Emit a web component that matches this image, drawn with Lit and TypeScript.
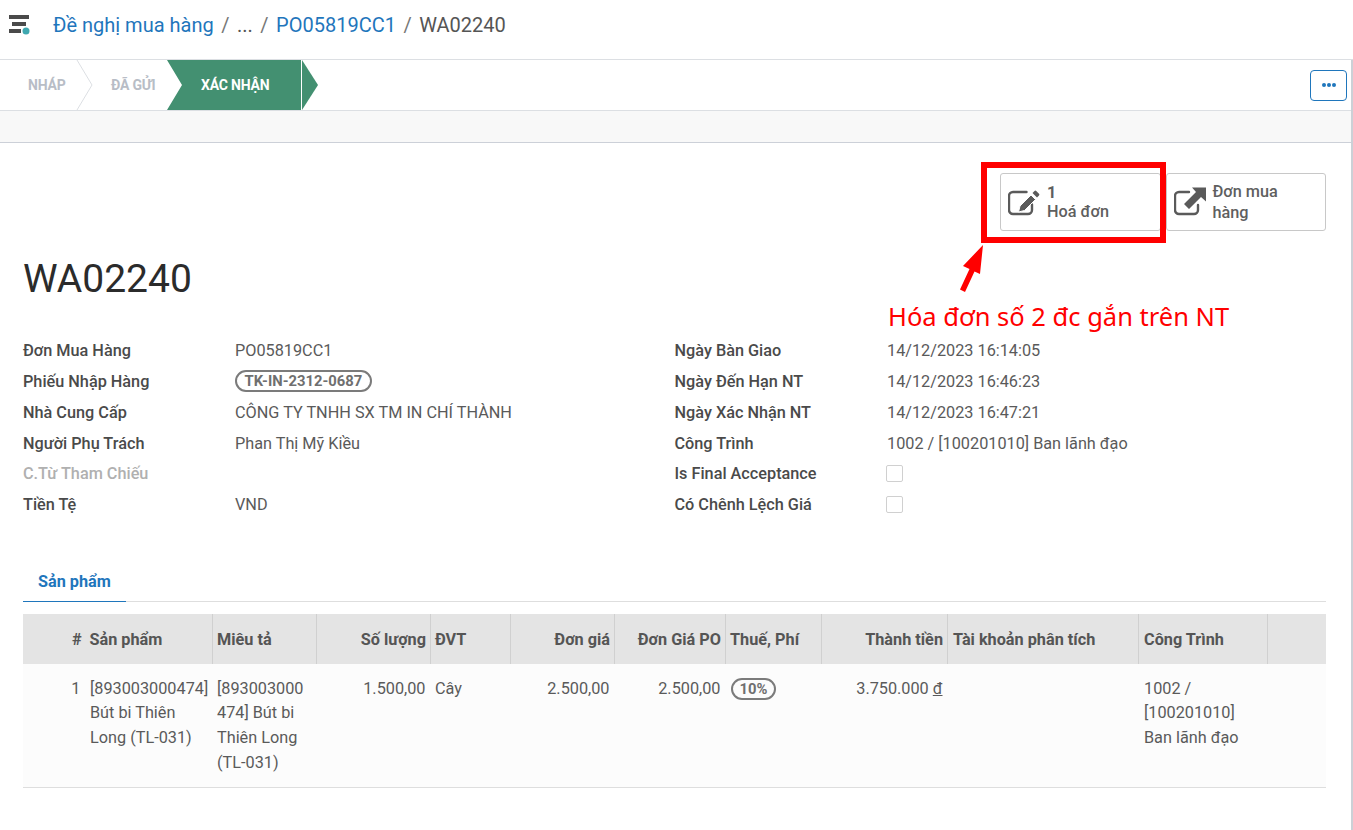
import { LitElement, css, html, svg } from "lit";
import { customElement } from "lit/decorators.js";

const leftFields = [
  { label: "Đơn Mua Hàng", value: "PO05819CC1" },
  { label: "Phiếu Nhập Hàng", tag: "TK-IN-2312-0687" },
  { label: "Nhà Cung Cấp", value: "CÔNG TY TNHH SX TM IN CHÍ THÀNH" },
  { label: "Người Phụ Trách", value: "Phan Thị Mỹ Kiều" },
  { label: "C.Từ Tham Chiếu", value: "", muted: true },
  { label: "Tiền Tệ", value: "VND" },
];

const rightFields = [
  { label: "Ngày Bàn Giao", value: "14/12/2023 16:14:05" },
  { label: "Ngày Đến Hạn NT", value: "14/12/2023 16:46:23" },
  { label: "Ngày Xác Nhận NT", value: "14/12/2023 16:47:21" },
  { label: "Công Trình", value: "1002 / [100201010] Ban lãnh đạo" },
  { label: "Is Final Acceptance", check: true },
  { label: "Có Chênh Lệch Giá", check: true },
];

const columns = [
  { label: "#", width: 62, cls: "num" },
  { label: "Sản phẩm", width: 127, cls: "" },
  { label: "Miêu tả", width: 104, cls: "" },
  { label: "Số lượng", width: 114, cls: "num" },
  { label: "ĐVT", width: 80, cls: "" },
  { label: "Đơn giá", width: 104, cls: "num" },
  { label: "Đơn Giá PO", width: 111, cls: "num" },
  { label: "Thuế, Phí", width: 96, cls: "" },
  { label: "Thành tiền", width: 126, cls: "num" },
  { label: "Tài khoản phân tích", width: 191, cls: "pad" },
  { label: "Công Trình", width: 129, cls: "pad" },
  { label: "", width: 59, cls: "" },
];

const editIcon = svg`<path d="M24 18.500V24a4 4 0 0 1-4 4H5a4 4 0 0 1-4-4V10a4 4 0 0 1 4-4H18.500" fill="none" stroke="#5a5a5a" stroke-width="2.400" stroke-linecap="round"/>
  <path d="M12 20 23 9 27.500 13.500 16.500 24.500 10.500 26Z" fill="#5a5a5a" stroke="#fff" stroke-width="1"/>
  <path d="M24.500 7 26.500 5a1.200 1.200 0 0 1 1.700 0L31 7.800a1.200 1.200 0 0 1 0 1.700L29 11.500Z" fill="#5a5a5a"/>`;

const linkIcon = svg`<path d="M24 19V24a4 4 0 0 1-4 4H5a4 4 0 0 1-4-4V10a4 4 0 0 1 4-4H15" fill="none" stroke="#5a5a5a" stroke-width="2.400" stroke-linecap="round"/>
  <path d="M18 1.500H32V15.500L27 11 15 23 10 18 22 6Z" fill="#5a5a5a"/>`;

@customElement("app-root")
export class AppRoot extends LitElement {
  static styles = css`
    :host {
      display: block;
      position: relative;
      width: 1353px;
      height: 830px;
      overflow: hidden;
      background: #fff;
      color: #555;
      font-family: Roboto, sans-serif;
      font-size: 16.250px;
    }

    .topbar {
      display: flex;
      align-items: center;
      height: 59px;
      border-bottom: 1px solid #dcdfe3;
      padding-left: 9px;
    }

    .apps {
      width: 21px;
      height: 20px;
      margin-right: 23px;
      margin-top: -10px;
    }

    .crumbs {
      display: flex;
      gap: 7.500px;
      font-size: 20px;
      margin-top: -10px;
      color: #555;
    }

    .crumbs .link {
      color: #1f76bc;
    }

    .crumbs .sep {
      color: #777;
    }

    .page {
      width: 1351px;
      height: 770px;
      border-right: 2px solid #ccd0d6;
    }

    .statusbar {
      display: flex;
      align-items: center;
      justify-content: space-between;
      height: 50px;
      border-bottom: 1px solid #dcdfe3;
      padding-right: 4px;
    }

    .steps {
      display: flex;
      height: 50px;
      font-size: 14px;
      font-weight: 700;
      line-height: 51px;
      letter-spacing: -0.200px;
      color: #b8bdc6;
    }

    .step {
      position: relative;
      text-align: left;
    }

    .step svg {
      position: absolute;
      left: 0;
      top: 0;
    }

    .step span {
      position: relative;
    }

    .step.draft {
      width: 93px;
      text-indent: 28px;
    }

    .step.sent {
      width: 74px;
      text-indent: 18px;
    }

    .step.active {
      width: 151px;
      text-indent: 34px;
      color: #fff;
    }

    .more {
      display: flex;
      align-items: center;
      justify-content: center;
      width: 37px;
      height: 31px;
      box-sizing: border-box;
      border: 1px solid #1f76bc;
      border-radius: 4px;
      background: #fff;
      padding: 0;
    }

    .strip {
      height: 31px;
      background: #f8f8f8;
      border-bottom: 1px solid #ccd0d8;
    }

    .sheet {
      padding: 30px 25px 0 23px;
    }

    .buttons {
      display: flex;
      justify-content: flex-end;
      gap: 5px;
    }

    .stat {
      display: flex;
      align-items: center;
      gap: 7px;
      width: 160.500px;
      height: 58px;
      box-sizing: border-box;
      border: 1px solid #c8c8c8;
      border-radius: 3px;
      padding-left: 7px;
      font-weight: 500;
      line-height: 21px;
      color: #5f5f5f;
    }

    .stat svg {
      flex: none;
    }

    .stat .text.count {
      line-height: 19px;
    }

    .stat strong {
      font-weight: 700;
    }

    h1 {
      margin: 26px 0 0;
      font-size: 39px;
      font-weight: 400;
      line-height: 44px;
      color: #2b2b2b;
    }

    .form {
      display: grid;
      grid-template-columns: 651.500px 1fr;
      margin-top: 34.300px;
    }

    .group {
      display: grid;
      grid-auto-rows: 30.800px;
      align-items: center;
    }

    .group.left {
      grid-template-columns: 212px 1fr;
    }

    .group.right {
      grid-template-columns: 212.500px 1fr;
    }

    .label {
      font-weight: 500;
      color: #4a4a4a;
    }

    .label.muted {
      color: #b0b0b0;
    }

    .value {
      color: #5a5a5a;
    }

    .pill {
      display: inline-block;
      box-sizing: border-box;
      height: 22px;
      line-height: 18px;
      border: 2px solid #7b7b7b;
      border-radius: 11px;
      padding: 0 7.500px;
      font-size: 14.800px;
      font-weight: 700;
      color: #6f6f6f;
      vertical-align: middle;
    }

    .check {
      display: block;
      width: 17px;
      height: 17px;
      margin-left: -1px;
      box-sizing: border-box;
      border: 1px solid #d0d0d0;
      border-radius: 2px;
    }

    .tabs {
      display: flex;
      margin-top: 38.700px;
      border-bottom: 1px solid #dedede;
    }

    .tab {
      width: 88px;
      padding-left: 15px;
      height: 42px;
      line-height: 45px;
      margin-bottom: -1px;
      border-bottom: 1px solid #1f76bc;
      font-weight: 700;
      color: #1f76bc;
    }

    table {
      width: 1303px;
      margin-top: 12px;
      border-collapse: collapse;
      table-layout: fixed;
    }

    th {
      height: 50px;
      padding: 2px 3.500px 0 4.500px;
      background: #e4e4e4;
      border-right: 1px solid #d0d0d0;
      font-weight: 700;
      text-align: left;
      color: #555;
      box-sizing: border-box;
    }

    th:first-child,
    th:last-child {
      border-right: none;
    }

    td {
      height: 124px;
      padding: 13px 5px 12px;
      background: #fcfcfc;
      border-bottom: 1px solid #dedede;
      line-height: 24.600px;
      vertical-align: top;
      box-sizing: border-box;
      overflow-wrap: anywhere;
      color: #5a5a5a;
    }

    td.code {
      padding-right: 2px;
    }

    th.pad {
      padding-left: 5.500px;
    }

    td.pad {
      padding-left: 6px;
    }

    th.num,
    td.num {
      text-align: right;
    }

    td.num {
      padding-right: 4.500px;
    }

    .tax {
      display: inline-block;
      box-sizing: border-box;
      height: 22px;
      line-height: 18px;
      margin-left: 0.500px;
      border: 2px solid #7b7b7b;
      border-radius: 11px;
      padding: 0 7px;
      font-size: 14.800px;
      font-weight: 700;
      color: #6f6f6f;
    }

    .currency {
      text-decoration: underline;
    }

    .callout {
      position: absolute;
      left: 981px;
      top: 162px;
      width: 185px;
      height: 81px;
      box-sizing: border-box;
      border: 6px solid #ff0000;
    }

    .arrow {
      position: absolute;
      left: 955px;
      top: 240px;
    }

    .note {
      position: absolute;
      left: 888px;
      top: 298px;
      font-family: "Noto Sans", sans-serif;
      font-size: 25.500px;
      line-height: 36px;
      color: #ff0000;
      white-space: nowrap;
    }
  `;

  private renderField(f: any) {
    return html`
      <div class="label ${f.muted ? "muted" : ""}">${f.label}</div>
      <div class="value">
        ${f.tag ? html`<span class="pill">${f.tag}</span>` : ""}
        ${f.check ? html`<span class="check"></span>` : ""}
        ${f.value ?? ""}
      </div>
    `;
  }

  render() {
    return html`
      <div class="topbar">
        <svg class="apps" viewBox="0 0 21 20">
          <rect x="0" y="0" width="20" height="4" fill="#4a4a4a"></rect>
          <rect x="3" y="7" width="14" height="4" fill="#4a4a4a"></rect>
          <rect x="0" y="14" width="12" height="4" fill="#4a4a4a"></rect>
          <circle cx="17" cy="16" r="3.500" fill="#3fa8b0"></circle>
        </svg>
        <div class="crumbs">
          <span class="link">Đề nghị mua hàng</span>
          <span class="sep">/</span>
          <span>...</span>
          <span class="sep">/</span>
          <span class="link">PO05819CC1</span>
          <span class="sep">/</span>
          <span>WA02240</span>
        </div>
      </div>

      <div class="page">
        <div class="statusbar">
          <div class="steps">
            <div class="step draft">
              <svg width="93" height="50"><path d="M77 0 92 25 77 50" fill="none" stroke="#dcdfe3"></path></svg>
              <span>NHÁP</span>
            </div>
            <div class="step sent"><span>ĐÃ GỬI</span></div>
            <div class="step active">
              <svg width="151" height="50"><path d="M0 0H134V50H0L15 25Z" fill="#439071"></path><path d="M135 0 151 25 135 50Z" fill="#439071"></path></svg>
              <span>XÁC NHẬN</span>
            </div>
          </div>
          <button class="more">
            <svg width="14" height="4"><circle cx="2" cy="2" r="2" fill="#1f76bc"></circle><circle cx="7" cy="2" r="2" fill="#1f76bc"></circle><circle cx="12" cy="2" r="2" fill="#1f76bc"></circle></svg>
          </button>
        </div>

        <div class="strip"></div>

        <div class="sheet">
          <div class="buttons">
            <div class="stat">
              <svg width="32" height="32" viewBox="0 0 32 32">${editIcon}</svg>
              <div class="text count"><strong>1</strong><br />Hoá đơn</div>
            </div>
            <div class="stat">
              <svg width="32" height="32" viewBox="0 0 32 32">${linkIcon}</svg>
              <div class="text">Đơn mua<br />hàng</div>
            </div>
          </div>

          <h1>WA02240</h1>

          <div class="form">
            <div class="group left">${leftFields.map((f) => this.renderField(f))}</div>
            <div class="group right">${rightFields.map((f) => this.renderField(f))}</div>
          </div>

          <div class="tabs"><div class="tab">Sản phẩm</div></div>

          <table>
            <colgroup>${columns.map((c) => html`<col style="width:${c.width}px" />`)}</colgroup>
            <thead>
              <tr>${columns.map((c) => html`<th class=${c.cls}>${c.label}</th>`)}</tr>
            </thead>
            <tbody>
              <tr>
                <td class="num">1</td>
                <td class="code">[893003000474] Bút bi Thiên Long (TL-031)</td>
                <td>[893003000474] Bút bi Thiên Long (TL-031)</td>
                <td class="num">1.500,00</td>
                <td>Cây</td>
                <td class="num">2.500,00</td>
                <td class="num">2.500,00</td>
                <td><span class="tax">10%</span></td>
                <td class="num">3.750.000 <span class="currency">đ</span></td>
                <td class="pad"></td>
                <td class="pad">1002 / [100201010] Ban lãnh đạo</td>
                <td></td>
              </tr>
            </tbody>
          </table>
        </div>
      </div>

      <div class="callout"></div>
      <svg class="arrow" width="34" height="56" viewBox="0 0 34 56">
        <path d="M28 5 25 34 19.500 31.500 10 52 5 49.500 14.500 29 8 26Z" fill="#ff0000"></path>
      </svg>
      <div class="note">Hóa đơn số 2 đc gắn trên NT</div>
    `;
  }
}
